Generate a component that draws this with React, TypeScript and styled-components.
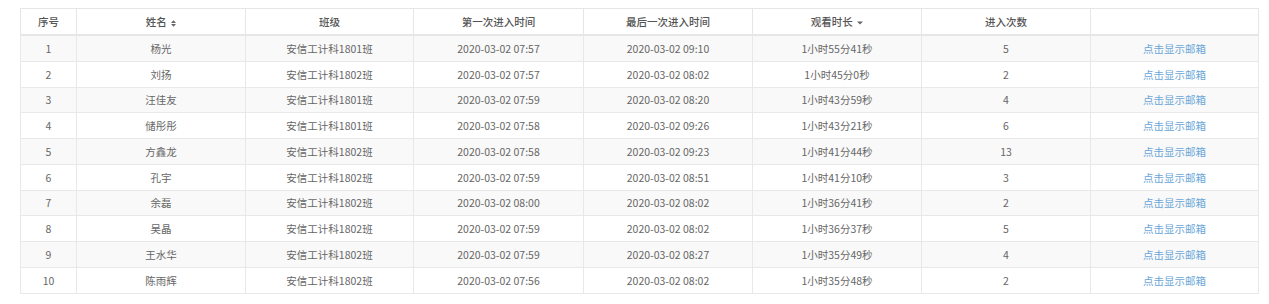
import React from "react";
import styled, { createGlobalStyle } from "styled-components";

const GlobalStyle = createGlobalStyle`
    body {
        margin: 0;
        background: #ffffff;
        font-family: "Microsoft YaHei", "Noto Sans CJK SC", "Noto Sans", sans-serif;
    }
`;

type Row = {
    name: string;
    klass: string;
    first: string;
    last: string;
    duration: string;
    count: number;
};

const rows: Row[] = [
    { name: "杨光", klass: "安信工计科1801班", first: "2020-03-02 07:57", last: "2020-03-02 09:10", duration: "1小时55分41秒", count: 5 },
    { name: "刘扬", klass: "安信工计科1802班", first: "2020-03-02 07:57", last: "2020-03-02 08:02", duration: "1小时45分0秒", count: 2 },
    { name: "汪佳友", klass: "安信工计科1801班", first: "2020-03-02 07:59", last: "2020-03-02 08:20", duration: "1小时43分59秒", count: 4 },
    { name: "储彤彤", klass: "安信工计科1801班", first: "2020-03-02 07:58", last: "2020-03-02 09:26", duration: "1小时43分21秒", count: 6 },
    { name: "方鑫龙", klass: "安信工计科1802班", first: "2020-03-02 07:58", last: "2020-03-02 09:23", duration: "1小时41分44秒", count: 13 },
    { name: "孔宇", klass: "安信工计科1802班", first: "2020-03-02 07:59", last: "2020-03-02 08:51", duration: "1小时41分10秒", count: 3 },
    { name: "余磊", klass: "安信工计科1802班", first: "2020-03-02 08:00", last: "2020-03-02 08:02", duration: "1小时36分41秒", count: 2 },
    { name: "吴晶", klass: "安信工计科1802班", first: "2020-03-02 07:59", last: "2020-03-02 08:02", duration: "1小时36分37秒", count: 5 },
    { name: "王水华", klass: "安信工计科1802班", first: "2020-03-02 07:59", last: "2020-03-02 08:27", duration: "1小时35分49秒", count: 4 },
    { name: "陈雨辉", klass: "安信工计科1802班", first: "2020-03-02 07:56", last: "2020-03-02 08:02", duration: "1小时35分48秒", count: 2 },
];

const widths = [56, 169, 168, 170, 169, 169, 169, 168];

export default function App() {
    return (
        <>
            <GlobalStyle />
            <Page>
                <Table>
                    <colgroup>
                        {widths.map((w, i) => (
                            <col key={i} style={{ width: w }} />
                        ))}
                    </colgroup>
                    <thead>
                        <tr>
                            <Th>序号</Th>
                            <Th>
                                姓名 <SortIcon>
                                    <svg width="5" height="7" viewBox="0 0 5 7">
                                        <path d="M0 2.9 L2.5 0.3 L5 2.9 Z M0 4.1 L2.5 6.7 L5 4.1 Z" fill="#666" />
                                    </svg>
                                </SortIcon>
                            </Th>
                            <Th>班级</Th>
                            <Th>第一次进入时间</Th>
                            <Th>最后一次进入时间</Th>
                            <Th>
                                观看时长 <SortIcon>
                                    <svg width="6" height="4" viewBox="0 0 6 4">
                                        <path d="M0 0.5 L6 0.5 L3 3.5 Z" fill="#666" />
                                    </svg>
                                </SortIcon>
                            </Th>
                            <Th>进入次数</Th>
                            <Th />
                        </tr>
                    </thead>
                    <tbody>
                        {rows.map((r, i) => (
                            <Tr key={i} $striped={i % 2 === 0}>
                                <Td>{i + 1}</Td>
                                <Td>{r.name}</Td>
                                <Td>{r.klass}</Td>
                                <Td>{r.first}</Td>
                                <Td>{r.last}</Td>
                                <Td>{r.duration}</Td>
                                <Td>{r.count}</Td>
                                <Td>
                                    <EmailLink href="#">点击显示邮箱</EmailLink>
                                </Td>
                            </Tr>
                        ))}
                    </tbody>
                </Table>
            </Page>
        </>
    );
}

// STYLES
const Page = styled.div`
    padding: 8px 11px 0 20px;
`;

const Table = styled.table`
    width: 1238px;
    border-collapse: collapse;
    table-layout: fixed;
    font-size: 10.5px;
    color: #666;
`;

const Th = styled.th`
    height: 25px;
    padding: 0 6px;
    border: 1px solid #e6e6e6;
    border-bottom-width: 2px;
    font-weight: 500;
    color: #555;
    text-align: center;
    vertical-align: middle;
    white-space: nowrap;
`;

const SortIcon = styled.span`
    display: inline-block;
    margin-left: 2px;
    vertical-align: middle;
    line-height: 0;

    svg {
        display: block;
    }
`;

const Tr = styled.tr<{ $striped: boolean }>`
    background: ${(p) => (p.$striped ? "#f9f9f9" : "#ffffff")};
`;

const Td = styled.td`
    height: 24.75px;
    padding: 0 6px;
    border: 1px solid #e8e8e8;
    text-align: center;
    vertical-align: middle;
    white-space: nowrap;
`;

const EmailLink = styled.a`
    color: #6ba6d8;
    text-decoration: none;
`;
